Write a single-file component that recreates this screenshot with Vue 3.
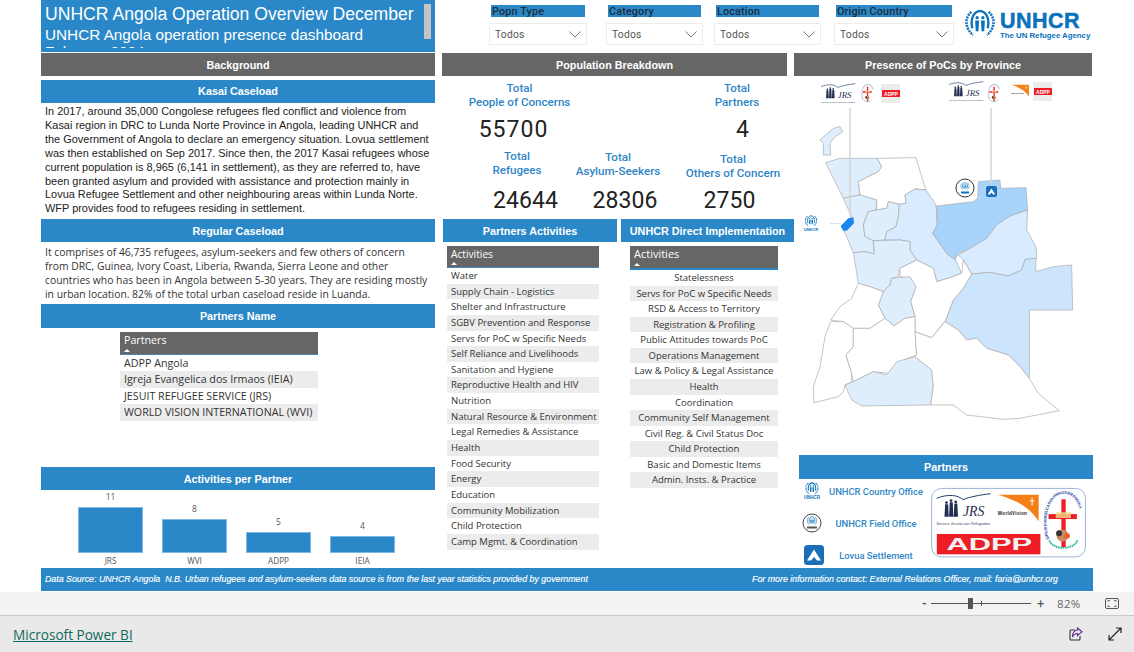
<script setup>
const filters = ['Popn Type', 'Category', 'Location', 'Origin Country']
const kasai = [
  'In 2017, around 35,000 Congolese refugees fled conflict and violence from',
  'Kasai region in DRC to Lunda Norte Province in Angola, leading UNHCR and',
  'the Government of Angola to declare an emergency situation. Lovua settlement',
  'was then established on Sep 2017. Since then, the 2017 Kasai refugees whose',
  'current population is 8,965 (6,141 in settlement), as they are referred to, have',
  'been granted asylum and provided with assistance and protection mainly in',
  'Lovua Refugee Settlement and other neighbouring areas within Lunda Norte.',
  'WFP provides food to refugees residing in settlement.'
]
const regular = [
  'It comprises of 46,735 refugees, asylum-seekers and few others of concern',
  'from DRC, Guinea, Ivory Coast, Liberia, Rwanda, Sierra Leone and other',
  'countries who has been in Angola between 5-30 years. They are residing mostly',
  'in urban location. 82% of the total urban caseload reside in Luanda.'
]
const partners = ['ADPP Angola', 'Igreja Evangelica dos Irmaos (IEIA)', 'JESUIT REFUGEE SERVICE (JRS)', 'WORLD VISION INTERNATIONAL (WVI)']
const bars = [
  { name: 'JRS', value: 11 },
  { name: 'WVI', value: 8 },
  { name: 'ADPP', value: 5 },
  { name: 'IEIA', value: 4 }
]
const activities = ['Water', 'Supply Chain - Logistics', 'Shelter and Infrastructure', 'SGBV Prevention and Response', 'Servs for PoC w Specific Needs', 'Self Reliance and Livelihoods', 'Sanitation and Hygiene', 'Reproductive Health and HIV', 'Nutrition', 'Natural Resource & Environment', 'Legal Remedies & Assistance', 'Health', 'Food Security', 'Energy', 'Education', 'Community Mobilization', 'Child Protection', 'Camp Mgmt. & Coordination']
const direct = ['Statelessness', 'Servs for PoC w Specific Needs', 'RSD & Access to Territory', 'Registration & Profiling', 'Public Attitudes towards PoC', 'Operations Management', 'Law & Policy & Legal Assistance', 'Health', 'Coordination', 'Community Self Management', 'Civil Reg. & Civil Status Doc', 'Child Protection', 'Basic and Domestic Items', 'Admin. Insts. & Practice']
const provinces = [
  { f: '#dfeefd', d: 'M90 90 L130 55 150 50 158 65 135 80 120 100 122 135 100 135 100 100 Z' },
  { f: '#dfeefd', d: 'M107 158 L150 145 262 145 275 170 265 185 205 215 210 255 160 265 Z' },
  { f: '#fff', d: 'M262 145 L378 143 395 200 408 240 375 237 345 255 348 280 328 283 295 275 290 295 260 300 260 270 210 255 205 215 265 185 275 170 Z' },
  { f: '#dfeefd', d: 'M160 265 L210 255 260 270 258 300 235 305 220 345 225 380 250 392 253 432 225 425 190 428 170 380 155 350 185 320 Z' },
  { f: '#dfeefd', d: 'M258 300 L290 295 295 275 328 283 325 320 318 350 290 365 285 390 250 392 225 380 220 345 235 305 Z' },
  { f: '#d9ebfe', d: 'M345 255 L375 237 408 240 438 285 442 345 428 370 470 430 497 450 515 490 480 503 440 515 430 475 380 450 360 420 360 395 330 390 285 390 290 365 318 350 325 320 328 283 348 280 Z' },
  { f: '#a8d4fc', d: 'M440 288 L550 275 563 265 565 215 630 210 632 235 708 233 713 300 660 318 620 345 590 385 540 415 505 430 495 450 470 430 428 370 442 345 Z' },
  { f: '#d9ebfe', d: 'M713 300 L710 360 738 410 740 445 705 450 695 480 655 498 600 487 545 492 520 450 505 435 540 415 590 385 620 345 660 318 Z' },
  { f: '#cce5fd', d: 'M545 492 L600 487 655 498 695 480 705 448 738 445 737 485 790 470 845 465 848 600 718 600 718 805 690 770 655 735 590 715 560 685 530 690 505 660 465 635 490 570 520 535 Z' },
  { f: '#dfeefd', d: 'M190 428 L225 425 253 432 250 392 330 390 360 395 360 420 380 450 330 475 325 500 305 505 300 525 280 545 240 530 205 520 Z' },
  { f: '#fff', d: 'M380 450 L430 475 440 515 480 503 515 490 520 450 545 492 520 535 490 570 465 635 460 640 425 683 375 665 375 620 362 575 378 530 360 505 330 500 330 475 Z' },
  { f: '#dfeefd', d: 'M305 505 L360 500 378 530 362 575 375 620 345 625 312 648 285 625 265 585 280 545 300 525 Z' },
  { f: '#fff', d: 'M205 520 L240 530 280 545 265 585 285 625 240 655 190 655 160 635 122 630 150 590 185 565 Z' },
  { f: '#fff', d: 'M122 635 L160 635 190 655 190 710 168 735 185 790 185 815 165 825 160 845 145 860 72 878 70 830 90 770 105 680 Z' },
  { f: '#fff', d: 'M190 655 L240 655 285 625 312 648 345 625 375 620 375 665 380 735 340 750 300 790 250 785 190 815 185 790 168 735 190 710 Z' },
  { f: '#dfeefd', d: 'M165 825 L190 815 250 785 290 795 320 755 375 740 425 780 430 830 422 885 215 888 185 870 Z' },
  { f: '#fff', d: 'M375 665 L425 683 465 635 505 660 530 690 560 685 590 715 655 735 690 770 718 805 745 850 808 902 690 925 640 928 530 915 490 885 422 885 430 830 425 780 375 740 380 735 Z' }
]
</script>

<template>
  <div class="page">
    <svg class="defs" aria-hidden="true">
      <defs>
        <symbol id="emblem" viewBox="0 0 34 30">
          <path d="M8 3C1 9 1 20 10 27" fill="none" stroke="#0a72bd" stroke-width="2.6" stroke-dasharray="2 1"/>
          <path d="M26 3C33 9 33 20 24 27" fill="none" stroke="#0a72bd" stroke-width="2.6" stroke-dasharray="2 1"/>
          <path d="M17 2C10 3 7 10 9 20M17 2C24 3 27 10 25 20" fill="none" stroke="#0a72bd" stroke-width="2.4"/>
          <circle cx="14" cy="9" r="1.7" fill="#0a72bd"/><circle cx="20" cy="9" r="1.7" fill="#0a72bd"/>
          <path d="M12 12h4l-.6 11h-2.8ZM18 12h4l-.6 11h-2.8Z" fill="#0a72bd"/>
        </symbol>
        <symbol id="tent" viewBox="0 0 20 20">
          <rect width="20" height="20" rx="3.5" fill="#1a70b8"/>
          <path d="M10 4.5 17 15.5H13L10 12 7 15.5H3Z" fill="#fff"/>
        </symbol>
        <symbol id="jrs" viewBox="15 22 172 106">
          <path d="M20 42C55 28 85 32 100 46 120 38 150 32 184 28" fill="none" stroke="#1f3f6b" stroke-width="3"/>
          <g fill="#1f2f4f">
            <path d="M46 60h9l2 38h-13ZM60 54h9l2 44h-13ZM74 58h9l2 40h-13Z"/>
            <circle cx="50" cy="55" r="4"/><circle cx="64" cy="49" r="4"/><circle cx="78" cy="53" r="4"/>
          </g>
          <text x="100" y="97" font-family="Liberation Serif, serif" font-style="italic" font-size="42" fill="#1f2f4f">JRS</text>
          <text x="20" y="122" font-family="Liberation Sans, sans-serif" font-size="11.5" fill="#3a4a6a" textLength="163">Servico Jesuita aos Refugiados</text>
        </symbol>
        <symbol id="wv" viewBox="200 25 135 105">
          <path d="M206 31H330V112C300 65 255 45 206 31Z" fill="#f57f17"/>
          <path d="M310 40v24M303 50h14" stroke="#fff" stroke-width="3"/>
          <text x="206" y="92" font-family="Liberation Sans, sans-serif" font-weight="700" font-size="14" fill="#222" textLength="88">WorldVision</text>
        </symbol>
        <symbol id="adpp" viewBox="20 150 316 63">
          <rect x="20" y="150" width="316" height="63" fill="#ee1c25"/>
          <text x="50" y="198" font-family="Liberation Sans, sans-serif" font-weight="700" font-size="48" fill="#f2f2f2" textLength="260" lengthAdjust="spacingAndGlyphs">ADPP</text>
        </symbol>
        <path id="ovalText" d="M362 165C340 110 360 28 408 28 455 28 472 110 452 165"/>
        <symbol id="oval" viewBox="345 20 120 195">
          <ellipse cx="405" cy="115" rx="52" ry="90" fill="#fff"/>
          <text font-family="Liberation Sans, sans-serif" font-weight="700" font-size="11.5" fill="#2a3f9e"><textPath href="#ovalText" textLength="235">IGREJA EVANGELICA DOS IRMAOS EM ANGOLA</textPath></text>
          <path d="M362 170C375 200 435 200 448 170" fill="none" stroke="#2fb8a0" stroke-width="6" stroke-dasharray="5 2"/>
          <rect x="399" y="45" width="13" height="145" fill="#ee1c25"/>
          <rect x="360" y="90" width="86" height="15" fill="#ee1c25"/>
          <rect x="382" y="84" width="46" height="18" fill="#f3d98b" opacity=".8"/>
          <circle cx="402" cy="155" r="18" fill="#c98a5e"/>
          <circle cx="392" cy="148" r="9" fill="#333"/>
          <circle cx="416" cy="156" r="9" fill="#e8622c"/>
        </symbol>
      </defs>
    </svg>

    <div class="report">
      <div class="main">
        <section class="left">
          <div class="title">
            <div class="title-clip">
              <div class="t1">UNHCR Angola Operation Overview December</div>
              <div class="t2">UNHCR Angola operation presence dashboard</div>
              <div class="t2">February 2024</div>
            </div>
            <span class="thumb"></span>
          </div>
          <div class="bar grey">Background</div>
          <div class="bar blue kasai-head">Kasai Caseload</div>
          <div class="kasai-text">
            <div v-for="l in kasai" :key="l">{{ l }}</div>
          </div>
          <div class="bar blue">Regular Caseload</div>
          <div class="regular-text">
            <div v-for="l in regular" :key="l">{{ l }}</div>
          </div>
          <div class="bar blue names-head">Partners Name</div>
          <div class="tbl tbl-partners">
            <div class="th">Partners<i class="tri"></i></div>
            <div v-for="p in partners" :key="p" class="td">{{ p }}</div>
          </div>
          <div class="bar blue activity-head">Activities per Partner</div>
          <div class="chart">
            <div v-for="b in bars" :key="b.name" class="col">
              <div class="val">{{ b.value }}</div>
              <div class="rect" :style="{ height: b.value * 4.2 + 'px' }"></div>
              <div class="cat">{{ b.name }}</div>
            </div>
          </div>
        </section>

        <section class="rightwrap">
          <div class="filters">
            <div v-for="f in filters" :key="f" class="filter">
              <div class="flabel">{{ f }}</div>
              <div class="dd">
                <span>Todos</span>
                <svg width="12" height="7" viewBox="0 0 12 7"><path d="M.5.5 6 6 11.500 .5" fill="none" stroke="#777" stroke-width="1"/></svg>
              </div>
            </div>
            <div class="logo">
              <svg width="34" height="29"><use href="#emblem"/></svg>
              <div class="logo-text">
                <div class="lg1">UNHCR</div>
                <div class="lg2">The UN Refugee Agency</div>
              </div>
            </div>
          </div>

          <div class="cols">
            <div class="mid">
              <div class="bar grey pop-head">Population Breakdown</div>
              <div class="stats stats-a">
                <div class="stat s1"><div class="lab">Total<br>People of Concerns</div><div class="num big">55700</div></div>
                <div class="stat s2"><div class="lab">Total<br>Partners</div><div class="num big">4</div></div>
              </div>
              <div class="stats stats-b">
                <div class="stat s3"><div class="lab">Total<br>Refugees</div><div class="num">24644</div></div>
                <div class="stat s4"><div class="lab">Total<br>Asylum-Seekers</div><div class="num">28306</div></div>
                <div class="stat s5"><div class="lab">Total<br>Others of Concern</div><div class="num">2750</div></div>
              </div>
              <div class="lists">
                <div class="list-a">
                  <div class="bar blue">Partners Activities</div>
                  <div class="tbl tbl-a">
                    <div class="th">Activities<i class="tri"></i></div>
                    <div v-for="a in activities" :key="a" class="td">{{ a }}</div>
                  </div>
                </div>
                <div class="list-b">
                  <div class="bar blue">UNHCR Direct Implementation</div>
                  <div class="tbl tbl-b">
                    <div class="th">Activities<i class="tri"></i></div>
                    <div v-for="a in direct" :key="a" class="td">{{ a }}</div>
                  </div>
                </div>
              </div>
            </div>

            <div class="right">
              <div class="bar grey presence">Presence of PoCs by Province</div>
              <svg class="map" width="310" height="379" viewBox="790 76 310 379">
                <use href="#jrs" x="820" y="82" width="36" height="23"/>
                <use href="#oval" x="860" y="84" width="15" height="20"/>
                <rect x="881" y="84" width="19" height="19" fill="#ececec"/>
                <rect x="882" y="90" width="18" height="7" fill="#ee1c25"/>
                <text x="891" y="95.500" text-anchor="middle" font-family="Liberation Sans, sans-serif" font-weight="700" font-size="5" fill="#fff">ADPP</text>
                <use href="#jrs" x="948" y="80" width="36" height="23"/>
                <use href="#oval" x="986" y="84" width="16" height="20"/>
                <use href="#wv" x="1008" y="84" width="24" height="15"/>
                <rect x="1033" y="82" width="19" height="19" fill="#ececec"/>
                <rect x="1034" y="88" width="18" height="7" fill="#ee1c25"/>
                <text x="1043" y="93.500" text-anchor="middle" font-family="Liberation Sans, sans-serif" font-weight="700" font-size="5" fill="#fff">ADPP</text>
                <g transform="translate(790 110) scale(.33333)">
                  <path v-for="(p, i) in provinces" :key="i" :d="p.d" :fill="p.f" stroke="#a8a8a8" stroke-width="2" stroke-linejoin="round"/>
                  <path d="M152 348 175 325 190 322 192 340 170 362 160 362Z" fill="#1b86ee"/>
                </g>
                <path d="M850 108V217M991 108V184" stroke="#d6d6d6" stroke-width="1.500" fill="none"/>
                <path d="M830 223.500H841" stroke="#e2e2e2" stroke-width="1"/>
                <circle cx="965" cy="188" r="9" fill="#fff" stroke="#333" stroke-width="1"/>
                <use href="#emblem" x="960" y="182" width="10" height="9"/>
                <rect x="961" y="191.500" width="8" height="2" fill="#0a72bd"/>
                <use href="#tent" x="986" y="186" width="11" height="11"/>
                <use href="#emblem" x="802" y="215" width="18" height="12"/>
                <text x="811" y="231" text-anchor="middle" font-family="Liberation Sans, sans-serif" font-size="4" font-weight="700" fill="#0a72bd">UNHCR</text>
              </svg>
              <div class="bar blue partners-head">Partners</div>
              <div class="legend-row">
                <div class="legend">
                  <div class="lg-item">
                    <span class="lg-ico lg-un"><svg width="20" height="13"><use href="#emblem"/></svg><b>UNHCR</b></span>
                    <span class="lg-txt">UNHCR Country Office</span>
                  </div>
                  <div class="lg-item">
                    <span class="lg-ico"><svg width="20" height="20" viewBox="0 0 20 20"><circle cx="10" cy="10" r="9" fill="#fff" stroke="#444" stroke-width="1"/><use href="#emblem" x="4" y="3" width="12" height="10"/><rect x="5" y="13.500" width="10" height="2" fill="#555"/></svg></span>
                    <span class="lg-txt">UNHCR Field Office</span>
                  </div>
                  <div class="lg-item">
                    <span class="lg-ico lg-tent"><svg width="20" height="20"><use href="#tent"/></svg></span>
                    <span class="lg-txt">Lovua Settlement</span>
                  </div>
                </div>
                <svg class="logos" width="165" height="78" viewBox="0 0 495 234">
                  <rect x="5" y="12" width="467" height="208" rx="30" fill="#fff" stroke="#9db2da" stroke-width="3"/>
                  <use href="#jrs" x="15" y="22" width="172" height="106"/>
                  <use href="#wv" x="200" y="25" width="135" height="105"/>
                  <use href="#adpp" x="20" y="150" width="316" height="63"/>
                  <use href="#oval" x="345" y="20" width="120" height="195"/>
                </svg>
              </div>
            </div>
          </div>
        </section>
      </div>
      <div class="source">
        <span>Data Source: UNHCR Angola &nbsp;N.B. Urban refugees and asylum-seekers data source is from the last year statistics provided by government</span>
        <span>For more information contact: External Relations Officer, mail: faria@unhcr.org</span>
      </div>
    </div>

    <div class="zoombar">
      <span class="pm">-</span>
      <div class="slider"><i class="knob"></i><i class="tick"></i></div>
      <span class="pm plus">+</span>
      <span class="pct">82%</span>
      <svg class="fit" width="14" height="11" viewBox="0 0 14 11"><rect x=".5" y=".5" width="13" height="10" rx="1.500" fill="none" stroke="#555"/><path d="M3 4V2.500H5M9 2.500H11V4M11 7V8.500H9M5 8.500H3V7" fill="none" stroke="#555" stroke-width=".8"/></svg>
    </div>
    <footer class="foot">
      <a class="pbi">Microsoft Power BI</a>
      <div class="foot-icons">
        <svg width="14" height="14" viewBox="0 0 14 14"><path d="M6 3H2a1 1 0 0 0-1 1v8a1 1 0 0 0 1 1h8a1 1 0 0 0 1-1V9" fill="none" stroke="#333" stroke-width="1.100"/><path d="M8.500 1 13 4.800 8.500 8.500V6.500C6 6.500 4.500 7.500 3.500 10 3.500 6 5.500 3.300 8.500 3Z" fill="none" stroke="#5b2a86" stroke-width="1.100"/></svg>
        <svg width="14" height="14" viewBox="0 0 14 14"><path d="M1 13 13 1M8 1h5v5M1 8v5h5" fill="none" stroke="#222" stroke-width="1.200"/></svg>
      </div>
    </footer>
  </div>
</template>

<style>
html, body { margin: 0; background: #fff; overflow: hidden; }
</style>

<style scoped>
.page { width: 1134px; height: 652px; display: flex; flex-direction: column; background: #fff; font-family: "Open Sans", sans-serif; position: relative; overflow: hidden; }
.defs { position: absolute; width: 0; height: 0; }
.report { height: 592px; padding-left: 41px; box-sizing: border-box; flex: none; }
.main { display: flex; height: 568px; }
.left { width: 394px; flex: none; }
.rightwrap { width: 651px; margin-left: 7px; flex: none; }

.bar { height: 23px; text-align: center; color: #fff; font: 700 10.8px/24px "Liberation Sans", Arial, sans-serif; white-space: nowrap; }
.grey { background: #666; }
.blue { background: #2b88c8; }

.title { height: 52px; margin-bottom: 1px; background: #2b88c8; position: relative; color: #fff; font-family: "Liberation Sans", Arial, sans-serif; box-sizing: border-box; padding-left: 4px; }
.title-clip { height: 48px; overflow: hidden; white-space: nowrap; }
.t1 { font-size: 17.6px; line-height: 24px; padding-top: 2px; }
.t2 { font-size: 15.3px; line-height: 17px; }
.thumb { position: absolute; left: 383px; top: 4px; width: 7px; height: 35px; background: #c4c4c4; }

.kasai-head { margin-top: 4px; line-height: 22px; }
.kasai-text { height: 116px; padding: 2px 0 0 4px; box-sizing: border-box; font: 10.95px/13.9px "Liberation Sans", Arial, sans-serif; color: #222; white-space: nowrap; }
.regular-text { height: 62px; padding: 3px 0 0 4px; box-sizing: border-box; font: 10.35px/14px "Open Sans", sans-serif; color: #333; white-space: nowrap; }
.names-head { height: 24px; line-height: 24px; }

.tbl { color: #333; white-space: nowrap; }
.th { background: #666; color: #fff; position: relative; padding-left: 4px; box-sizing: border-box; border-bottom: 1px solid #4a86b8; }
.tri { position: absolute; left: 4px; bottom: 2px; width: 0; height: 0; border-left: 3.5px solid transparent; border-right: 3.5px solid transparent; border-bottom: 3.5px solid #fff; }
.td { padding-left: 4px; }
.td:nth-child(odd) { background: #ececec; }

.tbl-partners { width: 198px; margin: 4px 0 0 79px; font-size: 10.7px; height: 135px; }
.tbl-partners .th { height: 23px; line-height: 16px; }
.tbl-partners .td { height: 16.400px; line-height: 16.400px; }

.activity-head { height: 23px; }
.chart { display: flex; gap: 19px; padding-left: 37px; height: 78px; align-items: flex-end; }
.col { width: 65px; display: flex; flex-direction: column; align-items: center; padding-bottom: 7px; }
.val { font-size: 8.500px; line-height: 11px; color: #555; margin-bottom: 5px; }
.rect { width: 100%; background: #2b88c8; box-sizing: border-box; border: 1px solid #7fb8e2; }
.cat { font-size: 8.200px; line-height: 16px; height: 8px; color: #555; }

.filters { height: 53px; display: flex; padding-left: 47px; box-sizing: border-box; }
.filter { display: flex; flex-direction: column; }
.filter:nth-child(1) { width: 98px; }
.filter:nth-child(2) { width: 97px; margin-left: 19px; }
.filter:nth-child(3) { width: 107px; margin-left: 11px; }
.filter:nth-child(4) { width: 120px; margin-left: 13px; }
.flabel { margin: 5px 2px 0; height: 12px; background: #2b88c8; color: #1d2c3a; font: 500 10.800px/13px Roboto, sans-serif; letter-spacing: .15px; padding-left: 1px; white-space: nowrap; overflow: visible; }
.dd { margin-top: 6px; height: 22px; border: 1px solid #ececec; box-sizing: border-box; display: flex; align-items: center; justify-content: space-between; padding: 0 5px; color: #555; font: 10.300px Roboto, sans-serif; letter-spacing: .2px; background: #fff; }
.logo { display: flex; margin: 9px 0 0 9px; color: #0a72bd; font-family: "Liberation Sans", Arial, sans-serif; font-weight: 700; white-space: nowrap; }
.logo-text { margin-left: 3px; }
.lg1 { font-size: 21.500px; line-height: 21px; letter-spacing: .5px; margin-top: 2px; -webkit-text-stroke: .5px #0a72bd; }
.lg2 { font-size: 7.800px; line-height: 7px; margin-top: 0; }

.cols { display: flex; }
.mid { width: 352px; flex: none; }
.right { width: 299px; flex: none; }
.pop-head { width: 345px; }
.presence { width: 298px; }

.stats { display: flex; }
.stats-a { padding-top: 5px; height: 73px; box-sizing: border-box; }
.stats-b { height: 70px; }
.lab { color: #2f86c6; font: 500 11.6px/14px Roboto, sans-serif; text-align: center; white-space: nowrap; }
.num { color: #222; font: 400 23px/28px Roboto, sans-serif; letter-spacing: .1px; text-align: center; margin-top: 6px; }
.big { letter-spacing: 1px; margin-top: 7px; }
.stat { flex: none; }
.s1 { width: 155px; margin-left: 0; }
.s1 .num { margin-right: 12px; }
.s2 { width: 100px; margin-left: 90px; }
.s2 .num { margin-left: 12px; }
.s3 { width: 100px; margin-left: 25px; }
.s3 .num { margin-left: 17px; margin-top: 10px; }
.s4 { width: 100px; margin-left: 1px; padding-top: 1px; }
.s4 .num { margin-top: 9px; margin-left: 14px; }
.s5 { width: 110px; margin-left: 10px; padding-top: 3px; }
.s5 .num { margin-top: 7px; margin-left: -7px; }

.lists { display: flex; }
.list-a { width: 174px; margin-left: 1px; }
.list-b { width: 173px; margin-left: 4px; }
.tbl-a { width: 152px; margin: 4px 0 0 4px; font-size: 9.500px; }
.tbl-a .th { font-size: 10.200px; line-height: 16px; height: 22px; }
.tbl-a .td { height: 15.650px; line-height: 15.600px; }
.tbl-b { width: 148px; margin: 4px 0 0 9px; font-size: 9.500px; }
.tbl-b .th { font-size: 11px; line-height: 16px; height: 24px; border-bottom: 2px solid #2b88c8; }
.tbl-b .td { height: 15.570px; line-height: 15.500px; padding: 0; text-align: center; }

.map { display: block; margin-left: -4px; height: 379px; }
.partners-head { margin-left: 5px; width: 294px; height: 24px; line-height: 24px; }
.legend-row { display: flex; margin-left: 5px; }
.legend { width: 131px; flex: none; padding-top: 4px; }
.lg-item { display: flex; height: 16px; align-items: center; margin-bottom: 16px; padding-left: 3px; }
.lg-ico { width: 20px; flex: none; display: flex; flex-direction: column; align-items: center; }
.lg-un b { font: 700 4.500px/5px "Liberation Sans", sans-serif; color: #0a72bd; }
.lg-tent { margin-left: 2px; margin-right: -2px; }
.lg-txt { flex: 1; text-align: center; font: 500 9.400px Roboto, sans-serif; color: #2f86c6; white-space: nowrap; }
.logos { display: block; margin-top: 5px; }

.source { height: 23px; margin-right: 41px; background: #2b88c8; color: #fff; display: flex; justify-content: space-between; padding: 0 35px 0 4px; font: italic 400 8.82px/23px "Liberation Sans", Arial, sans-serif; -webkit-text-stroke: .15px #fff; white-space: nowrap; }

.zoombar { height: 24px; flex: none; background: #f3f3f3; border-bottom: 1px solid #c8c8c8; box-sizing: border-box; display: flex; align-items: center; padding-left: 922px; color: #555; }
.pm { font: 700 12px Roboto, sans-serif; width: 9px; }
.slider { width: 100px; height: 1px; background: #555; position: relative; margin-left: 0; }
.knob { position: absolute; left: 37px; top: -5px; width: 5px; height: 11px; background: #555; }
.tick { position: absolute; left: 50px; top: -2px; width: 1px; height: 5px; background: #555; }
.plus { margin-left: 6px; font-weight: 400; font-size: 13px; }
.pct { margin-left: 11px; font: 11.500px "Open Sans", sans-serif; letter-spacing: .3px; color: #666; width: 48px; }
.fit { flex: none; }

.foot { flex: 1; background: #e9e9e9; display: flex; align-items: center; justify-content: space-between; padding: 0 13px; }
.pbi { color: #0e6a5e; text-decoration: underline; font: 13.6px "Open Sans", sans-serif; }
.foot-icons { display: flex; gap: 25px; margin-right: -1px; }
</style>
